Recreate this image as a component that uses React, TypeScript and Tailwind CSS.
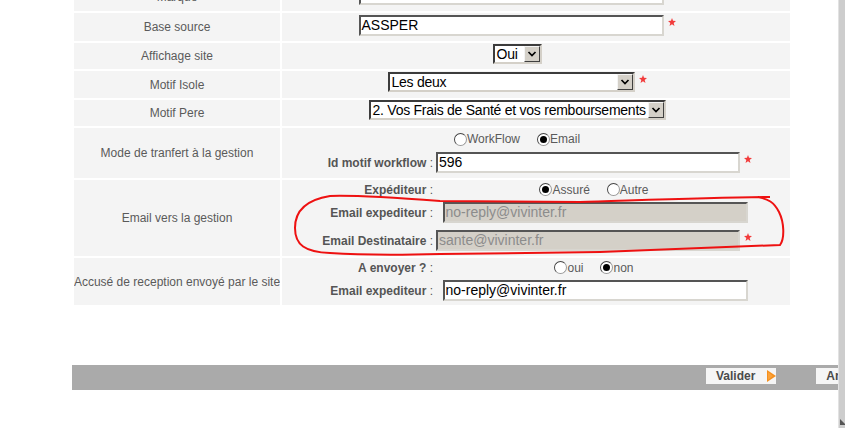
import { type FC, type ReactNode } from "react"

const Star: FC = () => (
  <svg width="8" height="8" viewBox="0 0 10 10" className="mt-[3px] ml-[4px] shrink-0">
    <polygon
      points="5,0 6.3,3.5 10,3.7 7.1,6.1 8.1,10 5,7.8 1.9,10 2.9,6.1 0,3.7 3.7,3.5"
      fill="#f23b3b"
    />
  </svg>
)

type InputProps = {
  value?: string
  width: string
  disabled?: boolean
}

const TextInput: FC<InputProps> = ({ value, width, disabled }) => (
  <div
    className={`${width} h-[21px] shrink-0 border-2 border-t-[#555555] border-l-[#555555] border-b-[#d8d6d0] border-r-[#d8d6d0] px-[1px] text-[14px] leading-[17px] whitespace-nowrap overflow-hidden ${
      disabled ? "bg-[#d4d0c8] text-[#8c8c8c]" : "bg-white text-black"
    }`}
  >
    {value}
  </div>
)

const Select: FC<{ value: string; width: string }> = ({ value, width }) => (
  <div
    className={`${width} h-[20px] shrink-0 flex border-2 border-t-[#3c3c3c] border-l-[#3c3c3c] border-b-[#d4d0c8] border-r-[#d4d0c8] bg-white`}
  >
    <span className="flex-1 pl-[2px] text-[14px] leading-[16px] tracking-[-0.25px] text-black whitespace-nowrap overflow-hidden">
      {value}
    </span>
    <span className="w-[16px] h-full shrink-0 bg-[#d4d0c8] border border-t-[#f4f4f4] border-l-[#f4f4f4] border-b-[#404040] border-r-[#404040] flex items-center justify-center">
      <svg width="10" height="8" viewBox="0 0 10 8">
        <path d="M1.5 2 L5 5.5 L8.5 2" stroke="#000" strokeWidth="1.7" fill="none" />
      </svg>
    </span>
  </div>
)

const Radio: FC<{ label: string; checked?: boolean }> = ({ label, checked }) => (
  <span className="flex items-center text-[12px] text-[#5a5a5a]">
    <span className="w-[13px] h-[13px] rounded-full border border-t-[#444] border-l-[#444] border-b-[#999] border-r-[#999] bg-white flex items-center justify-center">
      {checked && <span className="w-[7px] h-[7px] rounded-full bg-black" />}
    </span>
    <span>{label}</span>
  </span>
)

const SubLabel: FC<{ text: string }> = ({ text }) => (
  <div className="w-[154px] shrink-0 pr-[3px] text-right text-[12px] text-[#555] whitespace-nowrap">
    <span className="font-bold">{text}</span> :
  </div>
)

// ligne label / valeur du formulaire
const Row: FC<{ label: string; h: string; children?: ReactNode; cell?: string }> = ({ label, h, children, cell }) => (
  <div className={`flex gap-[2px] ${h}`}>
    <div className="w-[206px] shrink-0 bg-[#f4f4f4] flex items-center justify-center text-center text-[12px] text-[#5a5a5a] whitespace-nowrap overflow-hidden">
      {label}
    </div>
    <div className={`flex-1 bg-[#f4f4f4] pr-[38px] ${cell ?? "flex items-start justify-center"}`}>{children}</div>
  </div>
)

export default function App() {
  return (
    <div className="relative w-[845px] h-[428px] overflow-hidden bg-white flex font-['Liberation_Sans',Arial,sans-serif]">
      <div className="w-[838px] h-full overflow-hidden">
        <div className="ml-[74px] w-[716px] -mt-[17px] flex flex-col gap-[2px]">
          <Row label="Marque" h="h-[28px]" cell="flex items-end justify-center pb-[6px]">
            <TextInput width="w-[305px]" />
            <span className="w-[12px]" />
          </Row>

          <Row label="Base source" h="h-[28px]" cell="flex items-start justify-center pt-[2px]">
            <TextInput value="ASSPER" width="w-[305px]" />
            <Star />
          </Row>

          <Row label="Affichage site" h="h-[26px]" cell="flex items-start justify-center pt-[1px]">
            <Select value="Oui" width="w-[49px]" />
          </Row>

          <Row label="Motif Isole" h="h-[27px]" cell="flex items-start justify-center pt-[1px]">
            <Select value="Les deux" width="w-[247px]" />
            <Star />
          </Row>

          <Row label="Motif Pere" h="h-[26px]">
            <Select value="2. Vos Frais de Santé et vos remboursements" width="w-[297px]" />
          </Row>

          <Row label="Mode de tranfert à la gestion" h="h-[50px]" cell="flex flex-col pt-[2px]">
            <div className="h-[18px] flex items-center justify-center gap-[17px]">
              <Radio label="WorkFlow" />
              <Radio label="Email" checked />
            </div>
            <div className="mt-[4px] flex items-center">
              <SubLabel text="Id motif workflow" />
              <div className="flex-1 flex items-start justify-center">
                <TextInput value="596" width="w-[304px]" />
                <Star />
              </div>
            </div>
          </Row>

          <Row label="Email vers la gestion" h="h-[76px]" cell="flex flex-col pt-[1px]">
            <div className="h-[17px] flex items-center">
              <SubLabel text="Expéditeur" />
              <div className="flex-1 flex items-center justify-center gap-[17px]">
                <Radio label="Assuré" checked />
                <Radio label="Autre" />
              </div>
            </div>
            <div className="mt-[4px] flex items-center">
              <SubLabel text="Email expediteur" />
              <div className="flex-1 flex items-start justify-center pl-[2px]">
                <TextInput value="no-reply@vivinter.fr" width="w-[305px]" disabled />
              </div>
            </div>
            <div className="mt-[7px] flex items-center">
              <SubLabel text="Email Destinataire" />
              <div className="flex-1 flex items-start justify-center">
                <TextInput value="sante@vivinter.fr" width="w-[304px]" disabled />
                <Star />
              </div>
            </div>
          </Row>

          <Row label="Accusé de reception envoyé par le site" h="h-[47px]" cell="flex flex-col pt-[1px]">
            <div className="h-[17px] flex items-center">
              <SubLabel text="A envoyer ?" />
              <div className="flex-1 flex items-center justify-center gap-[17px]">
                <Radio label="oui" />
                <Radio label="non" checked />
              </div>
            </div>
            <div className="mt-[4px] flex items-center">
              <SubLabel text="Email expediteur" />
              <div className="flex-1 flex items-start justify-center pl-[2px]">
                <TextInput value="no-reply@vivinter.fr" width="w-[305px]" />
              </div>
            </div>
          </Row>
        </div>

        <div className="ml-[72px] mt-[60px] w-[800px] h-[25px] bg-[#aaaaaa] flex items-start pt-[3px] pl-[634px] gap-[40px]">
          <button className="h-[16px] w-[75px] bg-[#f5f5f5] flex items-center pl-[10px] text-[12px] font-bold text-[#4a4a4a]">
            <span>Valider</span>
            <svg width="9" height="12" viewBox="0 0 9 12" className="ml-[12px]">
              <polygon points="0,0 9,6 0,12" fill="#f5901e" />
              <polygon points="1,2 6,6 1,10" fill="#fba23a" />
            </svg>
          </button>
          <button className="h-[16px] w-[75px] bg-[#f5f5f5] flex items-center pl-[10px] text-[12px] font-bold text-[#4a4a4a]">
            Annuler
          </button>
        </div>
      </div>

      <div className="relative w-[7px] h-full bg-[#cdcdcd] border-l border-[#e2e2e2]">
        <svg width="6" height="6" viewBox="0 0 6 6" className="absolute left-[1px] top-[419px]">
          <polygon points="0,0 6,6 0,6" fill="#555" />
        </svg>
      </div>

      {/* annotation rouge à main levée */}
      <svg className="absolute inset-0 pointer-events-none" width="845" height="428" viewBox="0 0 845 428">
        <path
          d="M770 197 C700 198 620 201 580 202 C520 202 460 201 440 201 C400 198 360 195 330 196 C305 200 295 212 295 228 C295 245 305 252 330 253 C360 255 400 255 440 254 C520 253 560 253 600 252 C680 249 740 247 780 245 C785 238 784 222 779 212 C774 202 768 199 758 197"
          stroke="#ee1111"
          strokeWidth="2"
          fill="none"
        />
      </svg>
    </div>
  )
}
